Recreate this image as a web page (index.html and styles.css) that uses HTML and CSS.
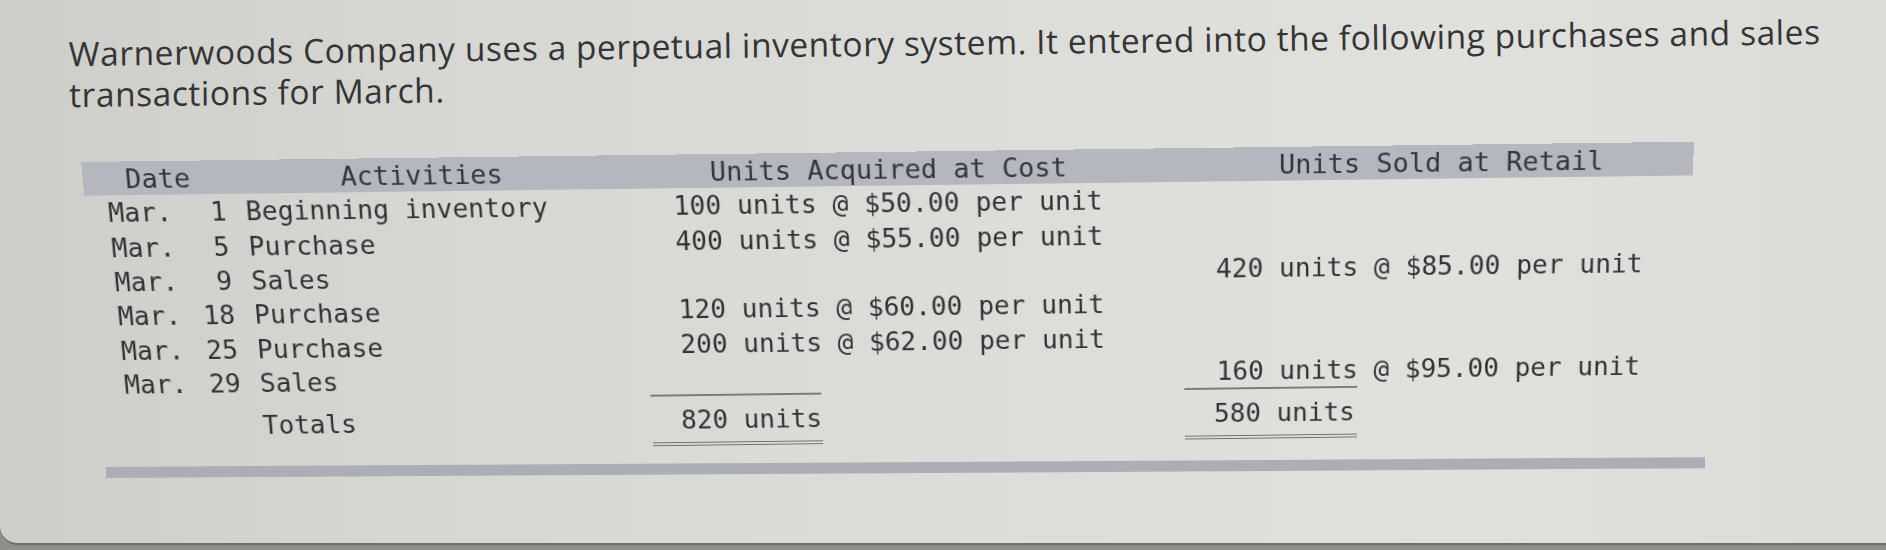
FILE: index.html
```html
<!DOCTYPE html>
<html lang="en">
<head>
<meta charset="utf-8">
<title>Warnerwoods Company – March transactions</title>
<link rel="stylesheet" href="styles.css">
</head>
<body>
<div class="screen">
  <div class="content">
    <p class="intro">Warnerwoods Company uses a perpetual inventory system. It entered into the following purchases and sales transactions for March.</p>
    <div class="tbl">
      <div class="thead">
        <span class="th">Date</span>
        <span class="th">Activities</span>
        <span class="th">Units Acquired at Cost</span>
        <span class="th">Units Sold at Retail</span>
      </div>
      <div class="row">
        <span class="mon">Mar.</span><span class="day">1</span><span class="act">Beginning inventory</span>
        <span class="acq">100 units @ $50.00 per unit</span><span class="sold"></span>
      </div>
      <div class="row">
        <span class="mon">Mar.</span><span class="day">5</span><span class="act">Purchase</span>
        <span class="acq">400 units @ $55.00 per unit</span><span class="sold"></span>
      </div>
      <div class="row">
        <span class="mon">Mar.</span><span class="day">9</span><span class="act">Sales</span>
        <span class="acq"></span><span class="sold">420 units @ $85.00 per unit</span>
      </div>
      <div class="row">
        <span class="mon">Mar.</span><span class="day">18</span><span class="act">Purchase</span>
        <span class="acq">120 units @ $60.00 per unit</span><span class="sold"></span>
      </div>
      <div class="row">
        <span class="mon">Mar.</span><span class="day">25</span><span class="act">Purchase</span>
        <span class="acq">200 units @ $62.00 per unit</span><span class="sold"></span>
      </div>
      <div class="row">
        <span class="mon">Mar.</span><span class="day">29</span><span class="act">Sales</span>
        <span class="acq"></span><span class="sold">160 units @ $95.00 per unit</span>
      </div>
      <div class="row total">
        <span class="tot-label">Totals</span>
        <span class="tot-acq"><span class="sum sum-acq">820 units</span></span>
        <span class="tot-sold"><span class="sum sum-sold">580 units</span></span>
      </div>
    </div>
  </div>
  <div class="endbar"></div>
</div>
</body>
</html>
```
FILE: styles.css
```css
html, body {
  margin: 0;
  padding: 0;
}
body {
  width: 1886px;
  height: 550px;
  overflow: hidden;
  background: #8e8f8b;
}
.screen {
  height: 545px;
  box-sizing: border-box;
  background: linear-gradient(90deg, #cdcec9 0%, #d6d7d3 22%, #dcddd9 50%, #e0e1dd 78%, #dbdcd8 100%);
  border-bottom: 2px solid #6f706c;
  border-bottom-left-radius: 18px;
  overflow: hidden;
}
.content {
  transform: rotate(-0.72deg);
  transform-origin: 0 0;
}
.intro {
  margin: 0;
  padding: 34px 30px 0 68px;
  font-family: "Open Sans", "Noto Sans", sans-serif;
  font-size: 33.5px;
  letter-spacing: 0.55px;
  line-height: 41px;
  color: #353535;
}
.tbl {
  margin: 47px 0 0 79px;
  width: 1613px;
  font-family: "DejaVu Sans Mono", "Liberation Mono", monospace;
  font-size: 26.5px;
  color: #333333;
  transform: perspective(1500px) rotateX(-6.55deg);
  transform-origin: 1071px 0;
}
.thead {
  display: grid;
  grid-template-columns: 215.5px 370px 570px 1fr;
  padding-left: 42.5px;
  height: 34px;
  align-items: center;
  background: #b4b7be;
  color: #33363d;
  font-size: 27px;
}
.row {
  display: grid;
  grid-template-columns: 106px 35px 420px 520px 532px;
  height: 35.4px;
  align-items: center;
  white-space: pre;
}
.mon { padding-left: 22.5px; }
.day { text-align: right; }
.act { padding-left: 19.5px; }
.acq { padding-left: 29px; }
.sold { padding-left: 53px; }

.row.total {
  grid-template-columns: 557px 544px 1fr;
  height: auto;
  align-items: start;
}
.tot-label {
  padding-left: 160px;
  padding-top: 10px;
  line-height: 34px;
}
.sum {
  display: block;
  box-sizing: border-box;
  border-top: 2px solid #7a7a7a;
  border-bottom: 4px double #6e6e6e;
  padding-top: 8px;
  padding-bottom: 6px;
  padding-left: 30px;
  line-height: 34px;
}
.sum-acq { width: 174px; }
.sum-sold { width: 176px; }
.endbar {
  margin: 4px 0 0 106px;
  width: 1599px;
  height: 11px;
  background: #abafb5;
  transform: rotate(-0.35deg);
  transform-origin: 0 50%;
}
```
